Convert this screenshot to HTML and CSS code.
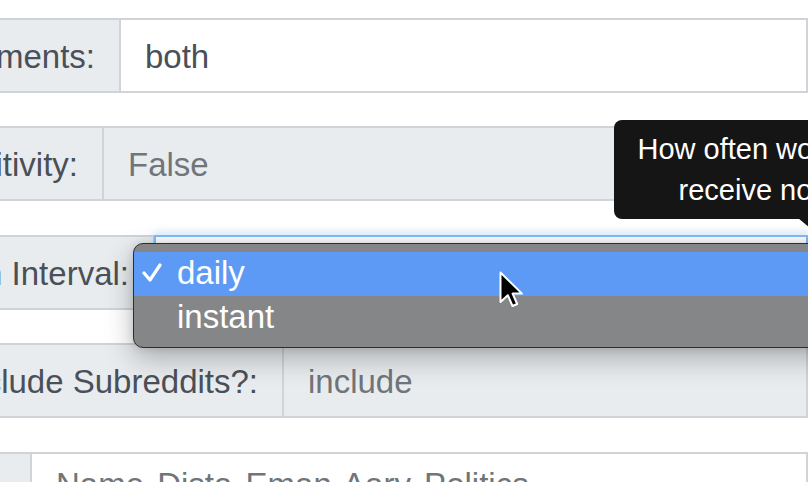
FILE: index.html
```html
<!DOCTYPE html>
<html>
<head>
<meta charset="utf-8">
<link rel="stylesheet" href="styles.css">
</head>
<body>
<div class="form">
  <div class="row">
    <div class="label w1"><span>Include Comments:</span></div>
    <div class="value">both</div>
  </div>
  <div class="row">
    <div class="label w2"><span>Case Sensitivity:</span></div>
    <div class="value disabled">False</div>
  </div>
  <div class="row">
    <div class="label w3"><span>Notification Interval:</span></div>
    <div class="value select"></div>
  </div>
  <div class="row">
    <div class="label w4"><span>Include/Exclude Subreddits?:</span></div>
    <div class="value disabled">include</div>
  </div>
  <div class="row">
    <div class="label w5"><span>Subreddits:</span></div>
    <div class="value tags">Name Dista Eman Aary Politics</div>
  </div>
</div>

<div class="popup">
  <div class="option active">
    <svg class="check" width="20" height="22" viewBox="0 0 20 22"><polyline points="2,11 8,18 18,3" fill="none" stroke="#fff" stroke-width="3.2" stroke-linecap="round" stroke-linejoin="round"/></svg>
    <span>daily</span>
  </div>
  <div class="option"><span>instant</span></div>
</div>

<div class="tooltip">How often would you like to receive notifications?</div>
<div class="tip-arrow"></div>

<svg class="cursor" width="26" height="38" viewBox="0 0 26 38">
  <polygon points="1.5,1.5 1.5,31 8.8,24.2 13.5,35 18.2,33 13.6,22.6 23,22.6" fill="#000" stroke="#fff" stroke-width="2" stroke-linejoin="round"/>
</svg>
</body>
</html>
```

FILE: styles.css
```css
html, body {
  margin: 0;
  padding: 0;
  width: 808px;
  height: 482px;
  overflow: hidden;
  background: #fff;
  font-family: "Liberation Sans", Arial, sans-serif;
}

.form {
  display: flex;
  flex-direction: column;
  gap: 33.5px;
  padding-top: 17.5px;
}

.row {
  display: flex;
  height: 75px;
  font-size: 33px;
}

.label {
  box-sizing: border-box;
  flex: none;
  display: flex;
  justify-content: flex-end;
  align-items: center;
  overflow: hidden;
  white-space: nowrap;
  padding: 3px 24px 0 0;
  background: #e9ecef;
  color: #495057;
  border: 2px solid #d0d4d9;
  border-left: none;
}

.w1 { width: 121px; }
.w2 { width: 104px; }
.w3 { width: 155px; }
.w4 { width: 284px; }
.w5 { width: 32px; }

.value {
  flex: 1;
  display: flex;
  align-items: center;
  padding: 3px 24px 0;
  color: #495057;
  background: #fff;
  border: 2px solid #d0d4d9;
  border-left: none;
  white-space: nowrap;
  overflow: hidden;
}

.value.disabled {
  background: #e9ecef;
  color: #70757a;
}

.value.tags {
  color: #70757a;
  padding-top: 12px;
  align-items: flex-start;
  word-spacing: 4px;
}

.value.select {
  border: 2px solid #80bdff;
  margin-left: -1px;
  box-shadow: 0 -5px 6px rgba(0, 123, 255, 0.1);
  position: relative;
}

.popup {
  position: absolute;
  left: 133px;
  top: 243px;
  width: 760px;
  height: 105px;
  box-sizing: border-box;
  padding-top: 8px;
  background: #858688;
  border: 1.5px solid #2e2e2e;
  border-radius: 10px;
  box-shadow: 0 10px 28px rgba(0, 0, 0, 0.28), 0 0 8px rgba(0, 0, 0, 0.12);
  font-size: 33px;
  color: #fff;
}

.option {
  height: 44px;
  display: flex;
  align-items: center;
  padding-left: 43px;
  position: relative;
}

.option.active {
  background: #5d9af5;
}

.option span {
  margin-top: -3px;
}

.check {
  position: absolute;
  left: 8px;
  top: 10px;
}

.tooltip {
  position: absolute;
  left: 614px;
  top: 120px;
  width: 400px;
  box-sizing: border-box;
  padding: 9px 14px 8px;
  background: #151515;
  color: #fff;
  border-radius: 8px;
  font-size: 29px;
  line-height: 41px;
  text-align: center;
}

.tip-arrow {
  position: absolute;
  left: 798px;
  top: 218px;
  width: 0;
  height: 0;
  border-left: 12px solid transparent;
  border-right: 12px solid transparent;
  border-top: 10px solid #151515;
}

.cursor {
  position: absolute;
  left: 499px;
  top: 271px;
}
```
